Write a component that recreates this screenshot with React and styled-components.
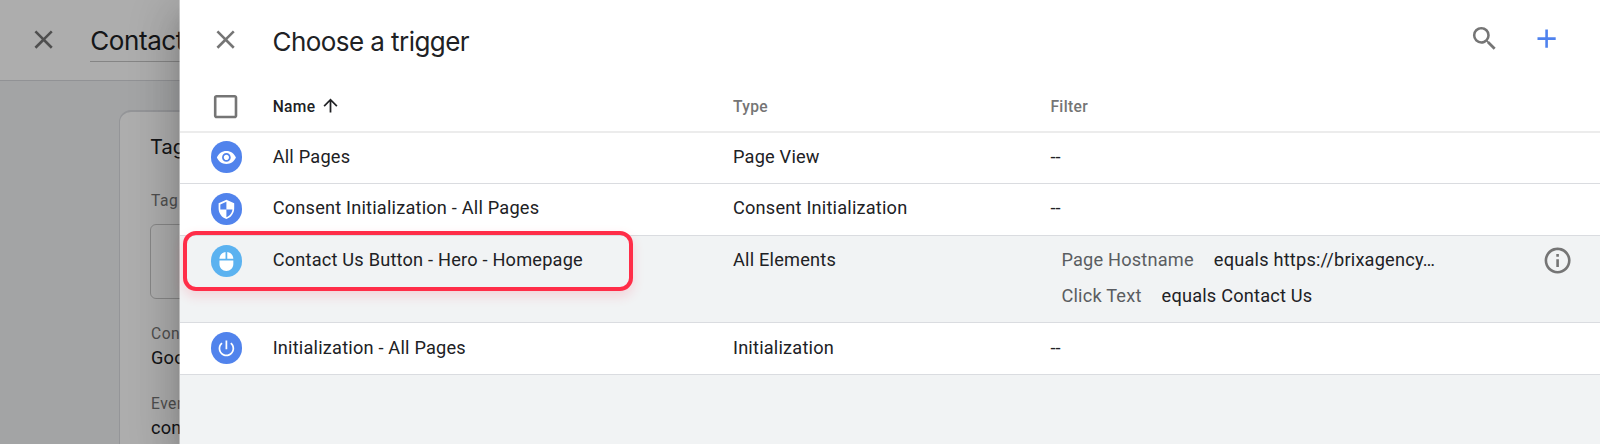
import React from "react";
import styled, { createGlobalStyle } from "styled-components";

const GlobalStyle = createGlobalStyle`
  *, *::before, *::after { box-sizing: border-box; }
  body {
    margin: 0;
    overflow: hidden;
    font-family: Roboto, "Liberation Sans", sans-serif;
    color: #202124;
  }
`;

const display = `font-family: Inter, Roboto, sans-serif;`;

const Page = styled.div`
  position: relative;
  height: 444px;
  overflow: hidden;
  background: #f1f2f4;
`;

const Editor = styled.div`
  display: flex;
  flex-direction: column;
  height: 100%;
`;

const EditorHeader = styled.header`
  display: flex;
  flex: none;
  align-items: flex-start;
  height: 81px;
  padding: 23.7px 0 0 28px;
  gap: 31px;
  background: #fff;
  border-bottom: 1px solid #d6d8dc;
`;

const EditorTitle = styled.div`
  ${display}
  flex: 1;
  height: 38.3px;
  font-size: 26px;
  letter-spacing: -0.4px;
  line-height: 34px;
  border-bottom: 1px solid #c4c4c4;
`;

const TagCard = styled.section`
  flex: none;
  height: 400px;
  margin: 29px 0 0 119px;
  padding: 22px 30px 0;
  background: #fff;
  border: 1px solid #dadce0;
  border-width: 2px 1px;
  border-top-left-radius: 12px;
`;

const CardTitle = styled.h2`
  ${display}
  margin: 0 0 29px;
  font-size: 20px;
  font-weight: 400;
  line-height: 26px;
  color: #202124;
`;

const FieldLabel = styled.div`
  margin-left: 1px;
  font-size: 15.6px;
  letter-spacing: 0.5px;
  line-height: 24px;
  color: #757575;
`;

const TagTypeBox = styled.div`
  height: 75px;
  margin: 11px 0 23px;
  border: 1px solid #c8c8c8;
  border-radius: 6px;
`;

const FieldValue = styled.div`
  margin: 0 0 22px 1px;
  font-size: 18.2px;
  letter-spacing: 0.2px;
  line-height: 24px;
`;

const Scrim = styled.div`
  position: absolute;
  inset: 0;
  background: rgba(0, 0, 0, 0.32);
`;

const Sheet = styled.aside`
  position: absolute;
  top: 0;
  right: 0;
  bottom: 0;
  width: 1420px;
  display: flex;
  flex-direction: column;
  background: #f1f3f4;
  box-shadow: -1px 0 0 rgba(255, 255, 255, 0.4), 0 11px 15px -7px rgba(0, 0, 0, 0.2),
    0 24px 38px 3px rgba(0, 0, 0, 0.14), 0 9px 46px 8px rgba(0, 0, 0, 0.12);
`;

const SheetHeader = styled.header`
  display: flex;
  flex: none;
  align-items: flex-start;
  height: 80px;
  padding: 23.7px 38px 0 30.4px;
  background: #fff;
`;

const SheetTitle = styled.h1`
  ${display}
  flex: 1;
  margin: 1px 0 0 31px;
  font-size: 26px;
  font-weight: 400;
  letter-spacing: -0.57px;
  line-height: 34px;
`;

const Actions = styled.div`
  display: flex;
  gap: 31px;
  margin-top: -0.7px;
`;

const Glyph = styled.svg`
  display: block;
  flex: none;
  width: ${(p) => p.$size || 31.2}px;
  height: ${(p) => p.$size || 31.2}px;
  fill: ${(p) => p.$color || "#757575"};
`;

const gridColumns = `
  display: grid;
  grid-template-columns: 92.7px 460.3px 317.4px 1fr 58.5px;
`;

const ColumnHeads = styled.div`
  ${gridColumns}
  flex: none;
  position: relative;
  height: 52px;
  background: #fff;
  border-bottom: 1px solid #ececec;
  box-shadow: 0 1px 0 #ececec;
`;

const ColumnHead = styled.div`
  display: flex;
  align-items: flex-start;
  gap: 4px;
  padding-top: 15px;
  font-size: 15.6px;
  font-weight: 500;
  letter-spacing: 0.35px;
  line-height: 24px;
  color: ${(p) => (p.$sorted ? "#202124" : "#757575")};
`;

const SelectAll = styled.div`
  padding: 11px 0 0 30.4px;
`;

const Row = styled.div`
  ${gridColumns}
  flex: none;
  min-height: 52px;
  background: ${(p) => (p.$active ? "#f1f3f4" : "#fff")};
  border-bottom: 1px solid #dadce0;
`;

const Cell = styled.div`
  padding-top: ${(p) => p.$top || 12}px;
  font-size: 18.2px;
  letter-spacing: 0.2px;
  line-height: 24px;
  white-space: nowrap;
`;

const IconCell = styled.div`
  padding: 9.4px 0 0 30.5px;
`;

const Badge = styled.div`
  display: flex;
  align-items: center;
  justify-content: center;
  width: 31.2px;
  height: 31.2px;
  border-radius: 50%;
  background: ${(p) => p.$color};
`;

const FilterList = styled.div`
  display: flex;
  flex-direction: column;
  gap: 12px;
  padding: 0 0 14px 11px;
`;

const FilterLine = styled.div`
  display: flex;
  gap: 20px;
`;

const FilterKey = styled.span`
  color: #5a5d61;
`;

const InfoCell = styled.div`
  padding-top: 9px;
`;

const Highlight = styled.div`
  position: absolute;
  left: 183px;
  top: 231px;
  width: 450px;
  height: 60px;
  border: 4px solid #ff2d48;
  border-radius: 13px;
  box-shadow: 0 5px 12px rgba(255, 45, 72, 0.16);
`;

const CloseIcon = () => (
  <Glyph viewBox="0 0 24 24">
    <path d="M19 6.41L17.59 5 12 10.59 6.41 5 5 6.41 10.59 12 5 17.59 6.41 19 12 13.41 17.59 19 19 17.59 13.41 12z" />
  </Glyph>
);

const CheckboxIcon = () => (
  <Glyph viewBox="0 0 24 24">
    <path d="M19 5v14H5V5h14m0-2H5c-1.1 0-2 .9-2 2v14c0 1.1.9 2 2 2h14c1.1 0 2-.9 2-2V5c0-1.1-.9-2-2-2z" />
  </Glyph>
);

const SearchIcon = () => (
  <Glyph viewBox="0 0 24 24">
    <path d="M15.5 14h-.79l-.28-.27A6.471 6.471 0 0 0 16 9.5 6.5 6.5 0 1 0 9.5 16c1.61 0 3.09-.59 4.23-1.57l.27.28v.79l5 4.99L20.49 19l-4.99-5zm-6 0C7.01 14 5 11.99 5 9.5S7.01 5 9.5 5 14 7.01 14 9.5 11.99 14 9.5 14z" />
  </Glyph>
);

const AddIcon = () => (
  <Glyph viewBox="0 0 24 24" $color="#4f82ee">
    <path d="M19 13h-6v6h-2v-6H5v-2h6V5h2v6h6v2z" />
  </Glyph>
);

const SortIcon = () => (
  <Glyph viewBox="0 0 24 24" $size={21} $color="#202124">
    <path d="M4 12l1.41 1.41L11 7.83V20h2V7.83l5.58 5.59L20 12l-8-8-8 8z" />
  </Glyph>
);

const InfoIcon = () => (
  <Glyph viewBox="0 0 24 24">
    <path d="M11 7h2v2h-2zm0 4h2v6h-2zm1-9C6.48 2 2 6.48 2 12s4.48 10 10 10 10-4.48 10-10S17.52 2 12 2zm0 18c-4.41 0-8-3.59-8-8s3.59-8 8-8 8 3.59 8 8-3.59 8-8 8z" />
  </Glyph>
);

const badgePaths = {
  eye: "M12 4.5C7 4.5 2.73 7.61 1 12c1.73 4.39 6 7.5 11 7.5s9.27-3.11 11-7.5c-1.73-4.39-6-7.5-11-7.5zM12 17c-2.76 0-5-2.24-5-5s2.24-5 5-5 5 2.24 5 5-2.24 5-5 5zm0-8c-1.66 0-3 1.34-3 3s1.34 3 3 3 3-1.34 3-3-1.34-3-3-3z",
  shield:
    "M12 1L3 5v6c0 5.55 3.84 10.74 9 12 5.16-1.26 9-6.45 9-12V5l-9-4zm0 10.99h7c-.53 4.12-3.28 7.79-7 8.94V12H5V6.3l7-3.11v8.8z",
  mouse:
    "M13 1.07V9h7c0-4.08-3.05-7.44-7-7.93zM4 15c0 4.42 3.58 8 8 8s8-3.58 8-8v-4H4v4zm7-13.93C7.05 1.56 4 4.92 4 9h7V1.07z",
  power:
    "M13 3h-2v10h2V3zm4.83 2.17l-1.42 1.42C17.99 7.86 19 9.81 19 12c0 3.87-3.13 7-7 7s-7-3.13-7-7c0-2.19 1.01-4.14 2.58-5.42L6.17 5.17C4.23 6.82 3 9.26 3 12c0 4.97 4.03 9 9 9s9-4.03 9-9c0-2.74-1.23-5.18-3.17-6.83z",
};

const triggers = [
  { icon: "eye", color: "#5183ec", name: "All Pages", type: "Page View", top: 13 },
  { icon: "shield", color: "#5183ec", name: "Consent Initialization - All Pages", type: "Consent Initialization" },
  {
    icon: "mouse",
    color: "#5bb2f0",
    name: "Contact Us Button - Hero - Homepage",
    type: "All Elements",
    filters: [
      ["Page Hostname", "equals https://brixagency…"],
      ["Click Text", "equals Contact Us"],
    ],
  },
  { icon: "power", color: "#5183ec", name: "Initialization - All Pages", type: "Initialization", top: 13 },
];

function TriggerRow({ trigger }) {
  return (
    <Row $active={Boolean(trigger.filters)}>
      <IconCell>
        <Badge $color={trigger.color}>
          <Glyph viewBox="0 0 24 24" $size={20.8} $color="#fff">
            <path d={badgePaths[trigger.icon]} />
          </Glyph>
        </Badge>
      </IconCell>
      <Cell $top={trigger.top}>{trigger.name}</Cell>
      <Cell $top={trigger.top}>{trigger.type}</Cell>
      <Cell $top={trigger.top}>
        {trigger.filters ? (
          <FilterList>
            {trigger.filters.map(([key, value]) => (
              <FilterLine key={key}>
                <FilterKey>{key}</FilterKey>
                <span>{value}</span>
              </FilterLine>
            ))}
          </FilterList>
        ) : (
          "--"
        )}
      </Cell>
      <InfoCell>{trigger.filters && <InfoIcon />}</InfoCell>
    </Row>
  );
}

export default function App() {
  return (
    <Page>
      <GlobalStyle />
      <Editor>
        <EditorHeader>
          <CloseIcon />
          <EditorTitle>Contact</EditorTitle>
        </EditorHeader>
        <TagCard>
          <CardTitle>Tag</CardTitle>
          <FieldLabel>Tag</FieldLabel>
          <TagTypeBox />
          <FieldLabel>Con</FieldLabel>
          <FieldValue>Goo</FieldValue>
          <FieldLabel>Even</FieldLabel>
          <FieldValue>con</FieldValue>
        </TagCard>
      </Editor>
      <Scrim />
      <Sheet>
        <SheetHeader>
          <CloseIcon />
          <SheetTitle>Choose a trigger</SheetTitle>
          <Actions>
            <SearchIcon />
            <AddIcon />
          </Actions>
        </SheetHeader>
        <ColumnHeads>
          <SelectAll>
            <CheckboxIcon />
          </SelectAll>
          <ColumnHead $sorted>
            Name <SortIcon />
          </ColumnHead>
          <ColumnHead>Type</ColumnHead>
          <ColumnHead>Filter</ColumnHead>
        </ColumnHeads>
        {triggers.map((t) => (
          <TriggerRow key={t.name} trigger={t} />
        ))}
      </Sheet>
      <Highlight />
    </Page>
  );
}
